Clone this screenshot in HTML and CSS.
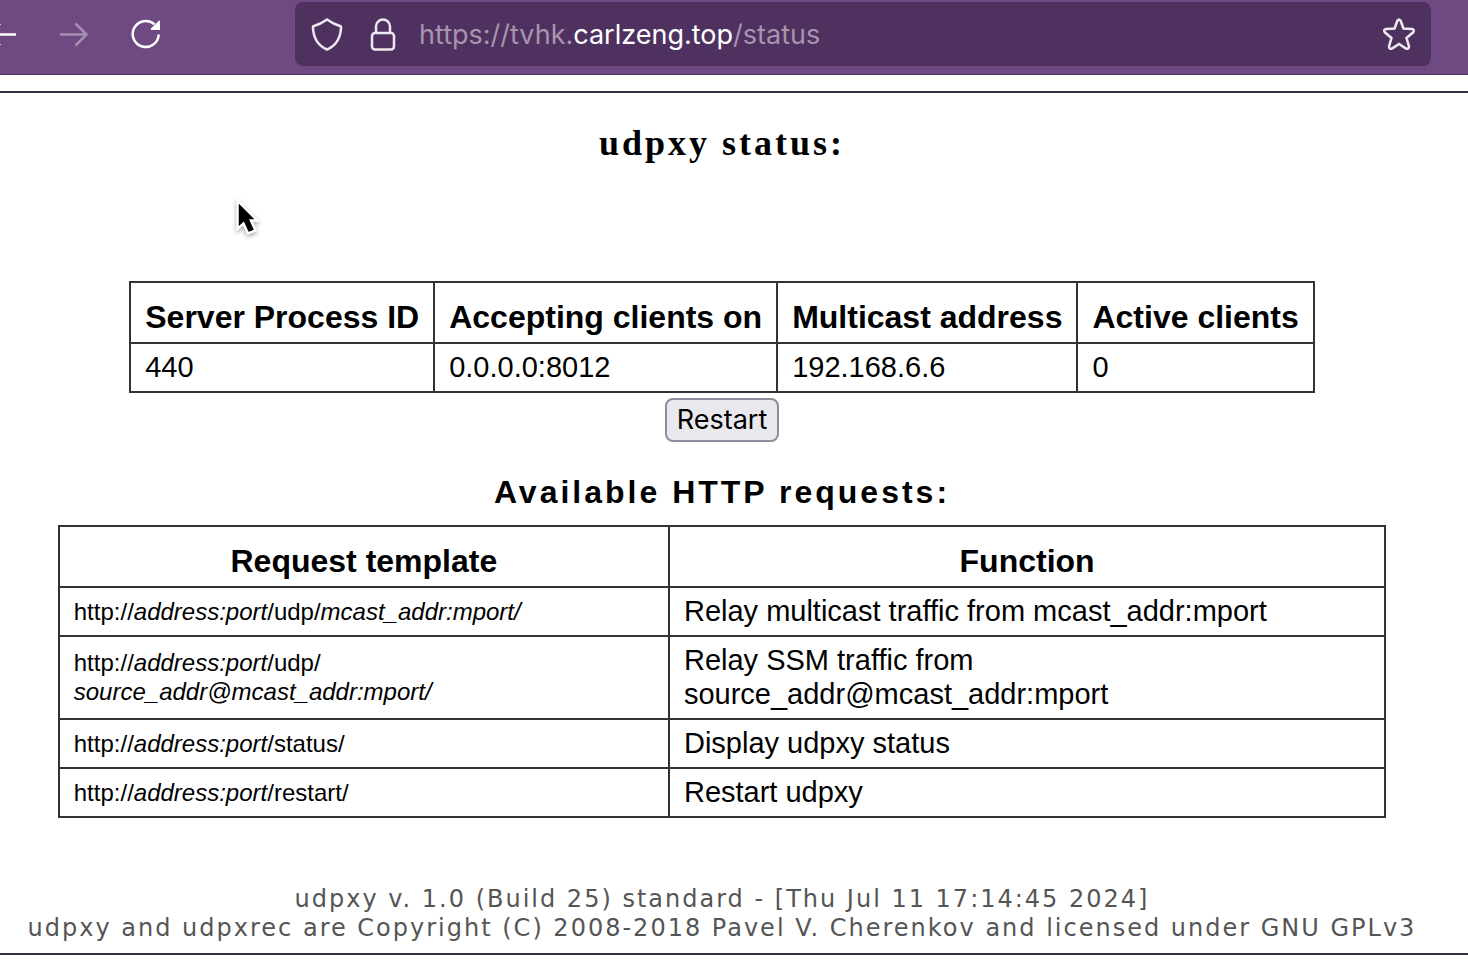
FILE: index.html
```html
<!DOCTYPE html>
<html lang="en">
<head>
<meta charset="utf-8">
<title>udpxy status</title>
<link rel="stylesheet" href="styles.css">
</head>
<body>
<header class="toolbar">
  <nav class="nav" aria-label="History">
    <button class="icon-button back" type="button" aria-label="Back">
      <svg width="32" height="32" viewBox="0 0 32 32"><path d="M30 16.500H4M14 5.500 3 16.500 14 27.500"/></svg>
    </button>
    <button class="icon-button forward" type="button" aria-label="Forward" disabled>
      <svg width="32" height="32" viewBox="0 0 32 32"><path d="M2 16.500H29M17.500 5.500 28.500 16.500 17.500 27.500"/></svg>
    </button>
    <button class="icon-button" type="button" aria-label="Reload">
      <svg width="32" height="32" viewBox="0 0 32 32"><path d="M28.700 16.500A13 13 0 1 1 24.500 6.400"/><path class="solid" d="M30 3V12H21.500Q20 12 21 10.500L28.500 3Q29.500 2 30 3Z"/></svg>
    </button>
  </nav>
  <div class="address">
    <svg width="32" height="34" viewBox="0 0 32 34"><path d="M16 2.500C19.500 5 24.500 7.800 29 9C30 9.300 30.200 10 30 11C29.500 20 26.500 28 16 32.500C5.500 28 2.500 20 2 11C1.800 10 2 9.300 3 9C7.500 7.800 12.500 5 16 2.500Z"/></svg>
    <svg width="32" height="34" viewBox="0 0 32 34"><rect x="5" y="16" width="22" height="16.500" rx="3"/><path d="M9 16V9.500A7 7 0 0 1 23 9.500V16"/></svg>
    <div class="url" role="textbox" contenteditable="true" spellcheck="false" aria-label="Address">https://tvhk.<span class="domain">carlzeng.top</span>/status</div>
    <button class="icon-button" type="button" aria-label="Bookmark this page">
      <svg width="34" height="34" viewBox="0 0 34 34"><path d="M15.400 3.700Q17 1.500 18.600 3.700L21.500 11.500 30 12Q33 12.700 31.200 15.300L24.500 21 27 29.500Q27 32.500 24 31.500L17 27 10 31.500Q7 32.500 7 29.500L9.500 21 2.800 15.300Q1 12.700 4 12L12.500 11.500Z"/></svg>
    </button>
  </div>
</header>
<main class="page">
  <section class="status">
    <h1 class="title">udpxy status:</h1>
    <table class="grid clients">
      <thead>
        <tr><th>Server Process ID</th><th>Accepting clients on</th><th>Multicast address</th><th>Active clients</th></tr>
      </thead>
      <tbody>
        <tr><td>440</td><td>0.0.0.0:8012</td><td>192.168.6.6</td><td>0</td></tr>
      </tbody>
    </table>
    <button class="restart" type="button">Restart</button>
    <h2 class="subtitle">Available HTTP requests:</h2>
    <table class="grid requests">
      <thead>
        <tr><th class="template-column">Request template</th><th>Function</th></tr>
      </thead>
      <tbody>
        <tr><td class="template">http://<i>address:port</i>/udp/<i>mcast_addr:mport/</i></td><td>Relay multicast traffic from mcast_addr:mport</td></tr>
        <tr><td class="template">http://<i>address:port</i>/udp/<br><i>source_addr@mcast_addr:mport/</i></td><td>Relay SSM traffic from<br>source_addr@mcast_addr:mport</td></tr>
        <tr><td class="template">http://<i>address:port</i>/status/</td><td>Display udpxy status</td></tr>
        <tr><td class="template">http://<i>address:port</i>/restart/</td><td>Restart udpxy</td></tr>
      </tbody>
    </table>
    <footer class="footer">udpxy v. 1.0 (Build 25) standard - [Thu Jul 11 17:14:45 2024]<br>udpxy and udpxrec are Copyright (C) 2008-2018 Pavel V. Cherenkov and licensed under GNU GPLv3</footer>
  </section>
</main>
<svg class="pointer" width="34" height="44" viewBox="0 0 34 44" aria-hidden="true"><path d="M5.500 4.500V33L11.500 27.500 16 37.500 23.500 34.500 19 24.500H25.500Z"/></svg>
</body>
</html>
```
FILE: styles.css
```css
* {
  box-sizing: border-box;
}

body {
  margin: 0;
  background: #fff;
  color: #000;
  font-family: "Liberation Sans", Arial, sans-serif;
}

svg {
  display: block;
  flex: none;
  fill: none;
  stroke: currentColor;
  stroke-width: 2.5;
}

.toolbar {
  display: flex;
  height: 75px;
  padding: 2px 37px 8px 0;
  background: #6f4a82;
  border-bottom: 1px solid #4f315f;
  color: #fff;
}

.nav {
  display: flex;
  align-items: center;
  gap: 40px;
  width: 295px;
  flex: none;
}

.icon-button {
  flex: none;
  padding: 0;
  border: 0;
  background: none;
  color: inherit;
}

.back {
  margin-left: -14px;
}

.forward {
  color: #a78fb3;
}

.solid {
  fill: currentColor;
  stroke: none;
}

.address {
  display: flex;
  flex: 1;
  align-items: center;
  gap: 24px;
  min-width: 0;
  padding: 0 15px 0 16px;
  border-radius: 8px;
  background: #4f315f;
  color: #eee9f0;
}

.url {
  flex: 1;
  padding-top: 2px;
  margin-left: -4px;
  outline: none;
  color: #a795af;
  font-family: Inter, sans-serif;
  font-size: 27px;
  line-height: 36px;
  white-space: nowrap;
}

.domain {
  color: #fff;
}

.page {
  padding-top: 16px;
}

.status {
  display: flex;
  flex-direction: column;
  align-items: center;
  padding-right: 24px;
  border-top: 2px solid #32303f;
  border-bottom: 2px solid #32303f;
}

.title,
.subtitle {
  margin: 0;
  letter-spacing: 3px;
}

.title {
  margin: 30px 0 118px;
  font-family: "Liberation Serif", "Times New Roman", serif;
  font-size: 36px;
  line-height: 40px;
}

.subtitle {
  margin: 32px 0 14px;
  font-size: 32px;
  line-height: 37px;
}

.grid {
  border-collapse: collapse;
}

.grid th,
.grid td {
  border: 2px solid #333;
}

.grid th {
  padding: 16px 14px 6px;
  font-size: 32px;
  line-height: 37px;
}

.grid td {
  padding: 6px 14px 7px;
  font-size: 29px;
  line-height: 34px;
}

.grid .template {
  font-size: 24px;
  line-height: 29px;
}

.requests {
  width: 92%;
}

.template-column {
  width: 46%;
}

.restart {
  margin-top: 5px;
  padding: 2px 10px;
  border: 2px solid #8f8b9e;
  border-radius: 8px;
  background: #e9e9ed;
  color: #000;
  font-family: Inter, sans-serif;
  font-size: 27px;
  line-height: 36px;
}

.footer {
  margin: 67px 0 10px;
  color: #555;
  font-family: Verdana, "DejaVu Sans", sans-serif;
  font-size: 24px;
  letter-spacing: 2px;
  line-height: 29px;
  text-align: center;
  white-space: nowrap;
}

.pointer {
  position: absolute;
  top: 196px;
  left: 232px;
  fill: #000;
  stroke: #fff;
  filter: drop-shadow(0 2px 2px rgb(0 0 0 / 35%));
}
```
